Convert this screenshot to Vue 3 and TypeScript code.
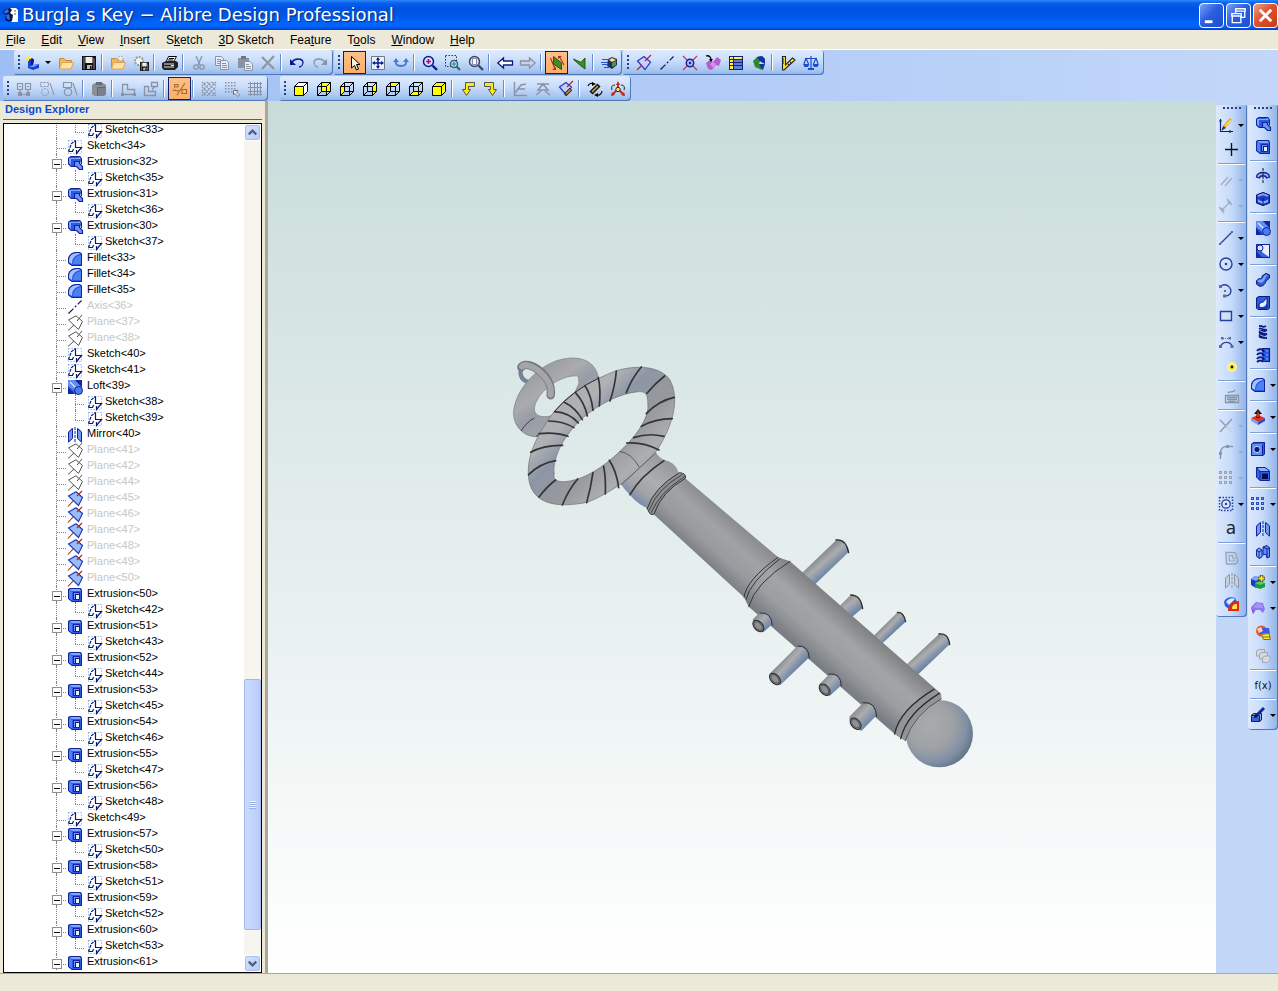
<script setup lang="ts">
import { ref } from 'vue'

interface MenuItem { before: string; key: string; after: string }
interface Tool { icon: string; label: string; drop?: boolean; active?: boolean; off?: boolean }
type Group = Tool[]
interface Bar { name: string; groups: Group[] }
interface Node { icon: string; text: string; dim?: boolean; children?: string[] }

const menus: MenuItem[] = [
  { before: '', key: 'F', after: 'ile' },
  { before: '', key: 'E', after: 'dit' },
  { before: '', key: 'V', after: 'iew' },
  { before: '', key: 'I', after: 'nsert' },
  { before: 'S', key: 'k', after: 'etch' },
  { before: '', key: '3', after: 'D Sketch' },
  { before: 'Fea', key: 't', after: 'ure' },
  { before: 'T', key: 'o', after: 'ols' },
  { before: '', key: 'W', after: 'indow' },
  { before: '', key: 'H', after: 'elp' },
]

const t = (icon: string, label: string, opts: Partial<Tool> = {}): Tool => ({ icon, label, ...opts })
const off = { off: true }

const rowOne: Bar[] = [
  { name: 'Standard', groups: [
    [t('newPart', 'New', { drop: true }), t('open', 'Open'), t('save', 'Save')],
    [t('openRepo', 'Open from repository'), t('saveRepo', 'Save to repository', off)],
    [t('print', 'Print')],
    [t('cut', 'Cut', off), t('copy', 'Copy', off), t('paste', 'Paste', off), t('remove', 'Delete', off)],
    [t('undo', 'Undo'), t('redo', 'Redo', off)],
  ] },
  { name: 'View', groups: [
    [t('cursor', 'Select', { active: true }), t('pan', 'Pan'), t('rotate', 'Rotate')],
    [t('zoomIn', 'Zoom'), t('zoomWin', 'Zoom to window'), t('zoomFit', 'Zoom to fit')],
    [t('back', 'Previous view'), t('forward', 'Next view', off)],
    [t('planeOn', 'Orient to plane', { active: true }), t('planeFlag', 'Section')],
    [t('render', 'Render')],
  ] },
  { name: 'Reference', groups: [
    [t('refPlane', 'Plane'), t('refAxis', 'Axis'), t('refPoint', 'Point'), t('refSurf', 'Surface'), t('table', 'Design table'), t('regen', 'Regenerate')],
    [t('measure', 'Measure'), t('scale', 'Physical properties')],
  ] },
]

const rowTwo: Bar[] = [
  { name: 'Sketch tools', groups: [
    [t('con1', 'Constraints', off), t('con2', 'Show constraints', off), t('con3', 'Auto constraints', off)],
    [t('clip', 'Clipboard', off)],
    [t('shapeL', 'Project', off), t('shapeL2', 'Inference', off)],
    [t('ortho', 'Ortho', { active: true })],
    [t('mesh', 'Snap', off), t('gridPick', 'Snap to grid', off), t('grid', 'Grid', off)],
  ] },
  { name: 'Orientation', groups: [
    [t('cubeFront', 'Front'), t('cubeBack', 'Back'), t('cubeLeft', 'Left'), t('cubeRight', 'Right'), t('cubeTop', 'Top'), t('cubeBottom', 'Bottom'), t('cubeIso', 'Isometric')],
    [t('turnL', 'Turn left'), t('turnR', 'Turn right')],
    [t('orSk', 'Orient to sketch', off), t('orSk2', 'Sketch view', off), t('planePen', 'Sketch on plane')],
    [t('penRot', 'Edit view'), t('triad', 'Triad')],
  ] },
]

const sketchBar: Group[] = [
  [t('skEdit', 'Activate sketch', { drop: true }), t('plus', 'Add')],
  [t('parallel', 'Parallel', { drop: true, off: true }), t('dim', 'Dimension', { drop: true, off: true })],
  [t('line', 'Line', { drop: true }), t('circle', 'Circle', { drop: true }), t('arc', 'Arc', { drop: true }), t('rect', 'Rectangle', { drop: true }), t('spline', 'Spline', { drop: true }), t('point', 'Point')],
  [t('keyboard', 'Direct entry', off)],
  [t('trim', 'Trim', { drop: true, off: true }), t('round', 'Fillet', { drop: true, off: true }), t('dots', 'Pattern', { drop: true, off: true }), t('circRef', 'Reference', { drop: true }), t('letter', 'Text')],
  [t('offset', 'Offset', off), t('mirrorOff', 'Mirror', off), t('project', 'Project to sketch')],
]

const featureBar: Group[] = [
  [t('extrude', 'Extrude boss'), t('exCut', 'Extrude cut')],
  [t('revolve', 'Revolve boss'), t('revCut', 'Revolve cut')],
  [t('loft', 'Loft boss'), t('loftCut', 'Loft cut')],
  [t('sweep', 'Sweep boss'), t('sweepCut', 'Sweep cut')],
  [t('helix', 'Helix boss'), t('helixCut', 'Helix cut')],
  [t('fillet', 'Fillet', { drop: true })],
  [t('draft', 'Draft', { drop: true })],
  [t('hole', 'Hole', { drop: true }), t('shell', 'Shell')],
  [t('dotsBlue', 'Pattern', { drop: true }), t('mirror', 'Mirror'), t('mirrorBody', 'Mirror body')],
  [t('boolAdd', 'Boolean', { drop: true }), t('surface', 'Surface', { drop: true }), t('colorBox', 'Catalog feature'), t('stackOff', 'Suppress', off)],
  [t('fx', 'Equation editor')],
  [t('paintBox', 'Color', { drop: true })],
]

const ext = (n: number, child: number, icon = 'exCut'): Node => ({ icon, text: `Extrusion<${n}>`, children: [`Sketch<${child}>`] })
const leaf = (icon: string, text: string, dim = false): Node => ({ icon, text, dim })

const tree = ref<Node[]>([
  ext(32, 35, 'extrude'), ext(31, 36, 'extrude'), ext(30, 37, 'extrude'),
  leaf('fillet', 'Fillet<33>'), leaf('fillet', 'Fillet<34>'), leaf('fillet', 'Fillet<35>'),
  leaf('refAxis', 'Axis<36>', true),
  leaf('planeHidden', 'Plane<37>', true), leaf('planeHidden', 'Plane<38>', true),
  leaf('sketch', 'Sketch<40>'), leaf('sketch', 'Sketch<41>'),
  { icon: 'loft', text: 'Loft<39>', children: ['Sketch<38>', 'Sketch<39>'] },
  leaf('mirror', 'Mirror<40>'),
  ...[41, 42, 44].map((n) => leaf('planeHidden', `Plane<${n}>`, true)),
  ...[45, 46, 47, 48, 49, 50].map((n) => leaf('planeBlue', `Plane<${n}>`, true)),
  ...[50, 51, 52, 53, 54, 55, 56].map((n) => ext(n, n - 8)),
  leaf('sketch', 'Sketch<49>'),
  ...[57, 58, 59, 60].map((n) => ext(n, n - 7)),
  { icon: 'exCut', text: 'Extrusion<61>', children: [] },
])

const s = (d: string, c: string, w = 1, f = 'none') => `<path d="${d}" fill="${f}" stroke="${c}" stroke-width="${w}"/>`
const f = (d: string, c: string) => `<path d="${d}" fill="${c}"/>`

const NAVY = '#0a1a8c'
const G = '#8a93a5'
const K = '#000'
const BLUE = '#2b5be0'
const SKY = '#7fa6f8'

const wires = s('M5.5 1.5H14.5V10.5H5.5ZM1.5 5.5H10.5V14.5H1.5ZM1.5 5.5L5.5 1.5M10.5 5.5L14.5 1.5M10.5 14.5L14.5 10.5M1.5 14.5L5.5 10.5', K)
const solid = 'M1.5 5.5L5.5 1.5H14.5V10.5L10.5 14.5H1.5Z'
const cube = (face: string) => f(face, '#ffff00') + wires
const corner = s('M1.5 5.5H10.5V14.5M10.5 5.5L14.5 1.5', K)

const dotGrid = (c: string, edge: string) =>
  [1, 6, 11].flatMap((x) => [2, 7, 12].map((y) => `<rect x="${x + 0.5}" y="${y - 0.5}" width="2" height="2" fill="${c}" stroke="${edge}"/>`)).join('')

const glass = (x: number, y: number, r: number, c: string) =>
  s(`M${x + r - 1} ${y + r - 1}L15 15`, c, 2.4) + `<circle cx="${x}" cy="${y}" r="${r}" fill="#cfe6ff" stroke="${c}" stroke-width="1.5"/>`

const folder = f('M1 4H6L8 6H14V14H1Z', '#f2b95c') + s('M1.5 13.5V3.5H6L7.5 5.5H13.5V7.5', '#c98a33') + f('M1 14L4 7H16L13 14Z', '#ffe2a4') + s('M1.5 14L4 7.5H15.5L13 14Z', '#dda350')

const disk = (x: number, y: number, z: number) =>
  `<g transform="translate(${x} ${y}) scale(${z})">` + f('M0 0H14V14H0Z', '#111') + f('M1.5 1H2.5V13H1.5ZM11.5 2H12.5V13H11.5Z', '#888') + f('M3.5 1H10.5V7H3.5Z', '#eee') + f('M5 9H10V13H5Z', '#bbb') + f('M8 10H9.5V13H8Z', '#111') + '</g>'

const planeShape = 'M1.5 5L9 .8L15.5 6.5L11.5 14.5Z'
const sketchGlyph = (c: string) =>
  `<path d="M1.5 1.5H14.5V14.5H1.5Z" fill="none" stroke="#5a96e6" stroke-dasharray="1 2"/>` +
  `<path d="M1.5 12.5L4.5 4.5L8.5 1.5" fill="none" stroke="${c}" stroke-width="1.2" stroke-dasharray="3 1"/>` +
  s('M1.5 12.5H5.5L6.500 10M8.5 1.5V8.5H14.5L9.5 14.5V11', c, 1.2)

const mirrorGlyph = (a: string, b: string) =>
  f('M1 5L5 1V12L1 16Z', a) + s('M1.5 5L5.5 1.5V11.5L1.5 15Z', b) + f('M11 1L15 5V16L11 12Z', a) + s('M10.5 1.5L14.5 5V15L10.5 11.5Z', b) + `<path d="M8 0V16" stroke="${b}" stroke-dasharray="3 1"/>`

const icons: Record<string, string> = {
  app: f('M7 1H13L15 3V15H7Z', '#fff') + f('M1 3L7 1L9 3L7 6L10 8L9 14L7 15L2 13L3 8L0 6Z', '#0c1440') + f('M1 4L5 2L6 5L2 7ZM3 8L6 7L7 13L4 12Z', '#2f6ff0') + s('M11 4H13M11 7H13', '#556'),
  newPart: f('M3 5L7 3L9 5L8 10L14 9V13L8 15L3 13Z', '#1742d8') + f('M7 3L9 5L8 10L6 11L6 5Z', '#0a1a8c') + f('M3 1H4V3H6V4H4V6H3V4H1V3H3Z', '#ffe060') + f('M4 12L8 10L14 9L9 12Z', '#6f9cff'),
  open: folder,
  save: disk(1, 1, 1),
  openRepo: folder + `<circle cx="10.5" cy="3.5" r="2.5" fill="#eee" stroke="#999" stroke-dasharray="2 1"/>`,
  saveRepo: `<circle cx="6" cy="6" r="4" fill="#f2f2f2" stroke="#999" stroke-width="2" stroke-dasharray="2 1"/>` + disk(7, 7, 0.64),
  print: f('M4 7L6 1H15L12 7Z', '#fff') + s('M4.5 6L6.5 1.5H14.5L12 6M7 3.5H12M6 5H11', K) + f('M0 8L4 6H14L16 7.5V12L13 15H2L0 13Z', '#222') + f('M2 8.5H12V9.5H2ZM2 11.5H12V12.5H2Z', '#ddd') + f('M9 10H12V11H9Z', '#ff0'),
  cut: s('M5 1L9 10M11 1L7 10', G, 1.3) + `<circle cx="5" cy="12" r="2.2" fill="none" stroke="${G}" stroke-width="1.3"/><circle cx="11" cy="12" r="2.2" fill="none" stroke="${G}" stroke-width="1.3"/>`,
  copy: s('M1.5 1.5H7.5L9.5 3.5V10.5H1.5ZM3 4.5H7M3 6.5H7M3 8.5H6', G, 1, '#e6edf8') + s('M6.5 5.5H12.5L14.5 7.5V14.5H6.5ZM8 8.5H12M8 10.5H13M8 12.5H13', G, 1, '#e6edf8'),
  paste: f('M1 3H12V13H1Z', G) + f('M4 1H9V4H4Z', '#6d7588') + s('M7.5 6.5H13L15.5 9V15.5H7.5ZM9 9.5H12M9 11.5H14M9 13.5H14', G, 1, '#e6edf8'),
  remove: s('M2 2L14 14M14 1L2 14', '#9098a8', 2.3),
  undo: s('M3 7C6 3 13 3 14 7C14 10 12 12 10 12', NAVY, 1.3) + f('M1 4V10H7Z', NAVY),
  redo: s('M13 7C10 3 3 3 2 7C2 10 4 12 6 12', G, 1.3) + f('M15 4V10H9Z', G),
  cursor: s('M4.5 1.5V13L7.5 10.5L9.5 15L11.5 14L9.5 9.5H13Z', K, 1, '#fff3dd'),
  pan: s('M1.5 1.5H14.5V14.5H1.5Z', '#778', 1, '#e7effc') + s('M8 3V13M3 8H13', NAVY, 1.4) + f('M8 2L10 5H6ZM8 14L10 11H6ZM2 8L5 6V10ZM14 8L11 6V10Z', NAVY),
  rotate: s('M3 6C2 9 4 11 8 11S14 9 13 6', '#4a78d0', 2) + f('M0 7L3 3L6 7ZM10 7L13 3L16 7Z', '#4a78d0'),
  zoomIn: glass(6.5, 6.5, 5, NAVY) + s('M6.5 4V9M4 6.5H9', '#c00070', 1.6),
  zoomWin: `<path d="M.5.5H11.5V11.5H.5Z" fill="none" stroke="#333" stroke-dasharray="1.5 1.5"/>` + glass(9, 9, 3.5, '#2c6a7c') + s('M9 7V11M7 9H11', '#2c6a7c'),
  zoomFit: glass(6.5, 6.5, 5, '#38486c') + s('M4.5 3.5H8.5V9.5H4.5Z', '#88a', 1, '#fff'),
  back: s('M.8 8L6.5 3V6H15.5V10H6.5V13Z', NAVY, 1.3, '#fff'),
  forward: s('M15.2 8L9.5 3V6H.5V10H9.5V13Z', G, 1.3, '#c8d3e6'),
  planeOn: f('M4 1L13 8V15L4 9Z', '#3f8e20') + s('M4.5 1.5L12.5 8V14.5L4.5 9Z', '#245c10') + s('M1.5 3L6 14M10 1L15 10', '#c02020', 1.1) + f('M3 15H7V12ZM13 1H9V4Z', '#c02020'),
  planeFlag: f('M1 4L9 7L13 3V14L9 11Z', '#3f8e20') + s('M1.5 4L9 7.5L13 3V14L9 11L1.5 4.5', '#245c10'),
  render: f('M7 4L11 2L16 4V10L11 14L6 11Z', '#1b2f70') + f('M8 5L11 3L15 5L11 7Z', '#ffe44a') + f('M11 8L15 6V10L11 12Z', '#4c9a38') + s('M1 4.5H8M0 7.5H7M1 9.5H7M3 12.5H8', '#2454c8'),
  refPlane: s('M1.5 6L8 1.5L14.5 7L9 14.5Z', '#2836c0', 1.2, '#c8d0fa') + s('M1 15L6 10M9 6L15 0', '#c02030', 1.2),
  refAxis: `<path d="M1.5 14.5L14.5 1.5" fill="none" stroke="#0a1a6c" stroke-width="1.2" stroke-dasharray="7 2 2 2"/>`,
  refPoint: s('M1 1L15 15M15 1L1 15', '#c0305a', 1.1) + `<circle cx="8" cy="8" r="3.7" fill="#aeb8f4" stroke="#1c2490" stroke-width="1.5"/><circle cx="8" cy="8" r="1.2" fill="#1c2490"/>`,
  refSurf: f('M1 8L5 5L8 7L12 2L16 5L14 11L11 10L7 15L3 14Z', '#b45cd0') + f('M5 9L8 7L11 9L8 13Z', '#d690ec') + s('M1 1C4 0 6 2 6 5', K, 1.3) + f('M4 4H8L6 7Z', K),
  table: f('M1 1H15V15H1Z', '#16206c') + f('M2 2H5V4H2ZM6 2H14V4H6ZM2 5H5V7H2ZM2 8H5V10H2ZM2 11H5V14H2Z', '#ffee44') + f('M6 5H14V7H6ZM6 8H14V10H6ZM6 11H14V14H6Z', '#5a7fe0'),
  regen: f('M2 6L6 2L11 1L14 4L9 6L8 9L13 11L11 15L4 12Z', '#2a8a2a') + f('M6 2L11 1L14 4V9L10 7L8 5Z', '#1230b0') + f('M8 9L14 9L12 15L10 13Z', '#123a90'),
  measure: f('M2 1H5V10L13 3L15 5L4 15H2Z', '#ffe818') + s('M2.5 1.5H5.5V10L12.5 3L15 5L4 15H2.5ZM3 4H4M3 6H4M3 8H4M8 9L9 10M10 7L11 8', '#222', 1.1),
  scale: s('M2 3.5H14M8 1V13M3 3L1 9M3 3L5.5 9M13 3L10.5 9M13 3L15 9', '#1c4cd0', 1.2) + f('M0 9H6.5L5 12H1.5ZM9.5 9H16L14.5 12H11ZM5 13H11V15H5Z', '#1c4cd0'),
  con1: s('M1.5 2.5H6.5V8.5H1.5ZM9.5 2.5H14.5V8.5H9.5ZM3 5.5H5M11 5.5H13M4 9V13M12 9V13M2 13.5H14', G, 1.2) + f('M2 11H6V15H2ZM10 11H14V15H10Z', G),
  con2: `<path d="M1.5 1.5H9.5V5.5H1.5Z" fill="none" stroke="${G}" stroke-dasharray="2 1"/><circle cx="6" cy="11" r="3.5" fill="none" stroke="${G}" stroke-dasharray="2 1"/>` + s('M11 2L15 14', G),
  con3: s('M1.5 1.5H9.5V6.5H1.5ZM11 2L15 14', G, 1.2) + `<circle cx="6" cy="11" r="3.7" fill="none" stroke="${G}" stroke-width="1.2"/>`,
  clip: f('M1 4L4 2H12L15 4V13L13 15H3L1 13Z', '#8b8f98') + f('M5 1H11V4H5Z', '#666c78') + s('M6.5 14.5V6.5H14.5', '#5f6572') + f('M7 7H15V13L13 15H7Z', '#7a808c'),
  shapeL: s('M2.5 3.5H7.500V8.5H14.5V13.5H2.5Z', G, 1.3) + f('M1 12H4V15H1ZM13 12H16V15H13Z', G),
  shapeL2: s('M1.5 5.5H5.5V10.5H12.5V14.5H1.5ZM8.5 1.5H14.5V5.5H8.5ZM9 9L12 5', G, 1.3),
  ortho: s('M1 10C3 7 5 12 7 9M5 14L13 2M10 8.5H14.5V12.5H10ZM2.5 3.5H6V6H2.5Z', '#a46c28', 1.1),
  mesh: `<path d="M1 5L5 1M1 10L10 1M1 15L15 1M6 15L15 6M11 15L15 11M11 1L15 5M6 1L15 10M1 1L15 15M1 6L10 15M1 11L5 15" fill="none" stroke="${G}" stroke-width="1.2" stroke-dasharray="2 1"/>`,
  gridPick: [1, 4, 7, 10].flatMap((x) => [1, 4, 7, 10].map((y) => `<rect x="${x}" y="${y}" width="1.5" height="1.5" fill="${G}"/>`)).join('') + s('M9.5 9.5H14L12.5 11L15.5 14L14 15.5L11 12.5L9.5 14Z', '#6d7588', 1, '#eef3fc'),
  grid: s('M1 2.5H15M1 6.5H15M1 10.5H15M1 13.5H15M3.5 1V15M7.5 1V15M10.5 1V15M13.5 1V15', G),
  cubeFront: f(solid, '#fff') + f('M1.5 5.5H10.5V14.5H1.5Z', '#ff0') + s(solid, K) + corner,
  cubeBack: cube('M5.5 1.5H14.5V10.5H5.5Z'),
  cubeLeft: cube('M1.5 5.5L5.5 1.5V10.5L1.5 14.5Z'),
  cubeRight: cube('M10.5 5.5L14.5 1.5V10.5L10.5 14.5Z'),
  cubeTop: cube('M1.5 5.5L5.5 1.5H14.5L10.5 5.5Z'),
  cubeBottom: cube('M1.5 14.5L5.5 10.5H14.5L10.5 14.5Z'),
  cubeIso: s(solid, K, 1, '#ff0') + corner,
  turnL: s('M14.5 1.5H5.5V8.5H2.5L6.500 14.5L10.5 8.5H8.5V5.5H14.5Z', '#555', 1, '#ffee00'),
  turnR: s('M1.5 1.5H10.5V8.5H13.5L9.500 14.5L5.5 8.5H7.5V5.5H1.5Z', '#555', 1, '#ffee00'),
  orSk: s('M2.5 1V14.5H15M3 12L9 4L14 3M5 8H13', G, 1.4),
  orSk2: s('M2 3H14M8 3L3 9H13ZM1 14L6 10M15 14L10 10', G, 1.5),
  planePen: s('M1.5 6L8 1.5L13.5 6L8 13.5Z', '#2836c0', 1.2, '#c8d0fa') + s('M9 6L15 0', '#c02030', 1.2) + s('M7 14L13 8', '#222', 3.6) + s('M8 13L12.5 8.5', '#e08a3c', 1.6),
  penRot: s('M4 12L12 4', '#111', 4.4) + s('M5 11L11 5', '#e0a04c', 1.6) + s('M1 5C2 2 5 2 7 3M15 10C15 13 12 15 9 14', K, 1.1) + f('M5 1L9 3L5 5ZM11 12V16L7 14Z', K),
  triad: s('M8 2V8L2 14M8 8L14 14', '#d02020', 1.8) + f('M8 0L10 4H6ZM1 15L2 11L5 14ZM15 15L14 11L11 14Z', '#d02020') + `<circle cx="8" cy="8.5" r="2.2" fill="#ffee44" stroke="#222"/>` + s('M2 9C1 6 2 4 5 4M14 9C15 6 14 4 11 4', '#222'),
  skEdit: s('M2.5 2V14.5H15', NAVY, 1.2) + s('M4 13L12 4M1 4L4 4M12 13V16', '#333', 1.2) + s('M6 10L13 2', '#f2a020', 3) + s('M7 9L13 3', '#ffe44a', 1.2) + f('M4 13L5 9L8 11Z', '#333'),
  plus: s('M7.5 1V14M1 7.5H14', '#111', 1.4),
  parallel: s('M3 13L10 5M7 14L14 6', '#a4adbf', 1.4),
  dim: s('M1 9L6 15M9 1L14 7M4 12L12 4', '#a4adbf', 1.3) + f('M3 13V9L7 13ZM13 3V7L9 3Z', '#a4adbf'),
  line: s('M2.5 13.5L13.5 2.5', '#26409c', 1.3) + f('M1 13H3V15H1ZM13 1H15V3H13Z', '#5a6cac'),
  circle: `<circle cx="8" cy="8" r="6" fill="none" stroke="#26409c" stroke-width="1.4"/><circle cx="8" cy="8" r="1.3" fill="#26409c"/>`,
  arc: s('M3 4C9 0 15 7 12 12C11 13 9 14.5 6 14', '#26409c', 1.4) + f('M1 3H4V6H1ZM5 12.5H8V15.5H5ZM6 8H8V10H6Z', '#5a6cac'),
  rect: s('M2.5 3.5H13.5V12.5H2.5Z', '#26409c', 1.4),
  spline: s('M2.5 13C4 7 12 7 14 12', '#26409c', 1.4) + f('M1 11H4V14H1ZM12.5 11H15.5V14H12.5ZM3 3H5.5V5.5H3ZM10.5 3H13V5.5H10.5Z', '#5a6cac') + `<path d="M5 4.5H11" stroke="#5a6cac" stroke-dasharray="1 1"/>`,
  point: `<circle cx="8" cy="8" r="5" fill="#f7f29a"/><circle cx="8" cy="8" r="3" fill="#ffee30"/><circle cx="8" cy="8" r="1.4" fill="#111"/>`,
  keyboard: s('M1.5 7.5H14.5V14.5H1.5ZM3 9.5H13M3 11.5H13M4.5 13.5H11M4 5C6 2 8 6 11 2', G, 1.3),
  trim: s('M2 2L13 13M14 1L2 14', '#8c96aa', 1.2) + f('M7 7L15 11L12 14Z', '#cdd5e2'),
  round: s('M2.5 15V9C2.5 4 6 2.5 9 2.5H15', '#8c96aa', 1.4) + f('M1 8H4V11H1ZM8 1H11V4H8Z', '#8c96aa'),
  dots: dotGrid('#c6cbd4', '#9aa2b2'),
  circRef: `<path d="M1.5 1.5H14.5V14.5H1.5Z" fill="none" stroke="#26409c" stroke-width="1.5" stroke-dasharray="1.5 1.5"/><circle cx="8" cy="8" r="4.2" fill="#dce8ff" stroke="#26409c" stroke-width="1.3"/><circle cx="8" cy="8" r="1.2" fill="#26409c"/>`,
  letter: '<text x="7" y="13" text-anchor="middle" font-family="DejaVu Sans, sans-serif" font-size="17" fill="#222">a</text>',
  offset: s('M2 2.5H9C13 2.5 13 6 12 7C15 9 14 14 10 14H2.5Z', '#9aa3b4', 1.4) + s('M5 5.5H8.5V8C11 8 11 11 9.5 11H5.5Z', '#9aa3b4', 1.2),
  mirrorOff: mirrorGlyph('#c8cdd6', '#9098a8'),
  project: f('M0 6C1 2 7 0 11 2L13 6L6 14L1 10Z', '#2b5be0') + f('M2 6C4 3 8 1 11 3L5 9Z', '#dce8ff') + f('M4 15C4 9 8 5 15 5V15Z', '#e02818') + f('M8 13C8 9 10 8 13 8V13Z', '#ffe14a'),
  extrude: f('M1 3L4 1H13L15 4V8L11 6H8V12H4L1 9Z', BLUE) + f('M2 3H11L13 2L14 4H4L4 10L2 8Z', SKY) + s('M1.5 3L4 1.5H13L14.5 4V9M1.5 3V9L4 11.5H8', '#10229c') + s('M7.5 6.5H12.5V8.5L15.5 11.5V14.5H12.5L9.5 11.5H7.5Z', '#10229c', 1.2, '#6e96f6'),
  exCut: f('M1 2L3 1H14L15 3V15H5L1 12Z', BLUE) + f('M2 3L5 5V14L2 11Z', '#4f80f4') + f('M3 2H13L14 4H5L3 3Z', SKY) + s('M1.5 2.5L3 1.5H13L14.5 3.5V14.5H5L1.5 11.5Z', '#10229c') + s('M6.5 5.5H12.5V12.5H6.5Z', '#10229c', 1, '#6d96f8') + f('M8 7H12V12H8Z', '#0c1a7c') + f('M9 8H12V12H9Z', '#e8f0ff'),
  revolve: f('M1 9C1 3 15 3 15 9L11 10C11 7 5 7 5 10Z', '#8fb2f8') + s('M1.5 9C1.5 3 14.5 3 14.5 9L11.5 10C11 7 5 7 4.5 10Z', '#10229c', 1.3) + `<path d="M8 0V16" stroke="#111" stroke-dasharray="3 1"/>`,
  revCut: f('M1 4L8 1L15 4V12L8 15L1 12Z', '#1a3cc8') + f('M2 4L8 2L14 4L12 6C10 4 6 4 4 6Z', SKY) + f('M3 8C6 11 10 11 13 8V11L8 13L3 11Z', '#86a8f6') + s('M1.5 4L8 1.5L14.5 4V12L8 14.5L1.5 12ZM8 7V14', '#0c1a7c'),
  loft: f('M1 1H15V15H1Z', '#2450d8') + f('M1 1H8L15 9V15H11L1 7Z', '#5f8ef6') + f('M8 1H15V8Z', '#15259c') + f('M1 8L7 15H1Z', '#15259c') + s('M3 3L10 10', '#dfe9ff', 1.2) + `<circle cx="11.5" cy="11.5" r="4" fill="#4c7cf4" stroke="#142090"/>`,
  loftCut: f('M1 1H15V15H1Z', '#3664e4') + f('M6 2H14V14L7 9Z', '#e6eeff') + s('M1.5 1.5H14.5V14.5H1.5Z', '#10229c') + `<circle cx="5" cy="5" r="3" fill="#dce8ff" stroke="#10229c"/>` + f('M2 9L7 14H2Z', '#1a2ca8'),
  sweep: f('M1 9L4 6C7 8 7 5 7 4L11 1L15 3V6L11 9C10 13 7 15 4 14L1 12Z', BLUE) + f('M2 9L4 7C8 9 8 5 9 4L12 2L13 3C9 5 11 9 6 11Z', SKY) + s('M1.5 9L4 6.5C7 8 7 5 7 4L11 1.5L14.5 3V6L11 9C10 13 7 15 4 14L1.5 12Z', '#0c1a7c'),
  sweepCut: f('M1 3L4 1H15V13L13 15H3L1 13Z', BLUE) + f('M4 9L7 7C9 8 9 5 12 3V8C10 12 8 12 5 12Z', '#eaf1ff') + s('M1.5 3L4 1.5H14.5V13L12.5 14.5H3L1.5 13ZM4 9L7 7C9 8 9 5 12 3V13H4Z', '#0c1a7c'),
  helix: s('M4 2C14 2 1 6 12 6C2 6 2 10 12 10C2 9 2 14 12 14M11 2L4 5M12 6L4 9M12 10L4 13', '#0c1a7c', 1.9) + s('M5 3L11 5M5 7L11 9M5 11L11 13', SKY, 1),
  helixCut: f('M7 1H14V15H7Z', BLUE) + s('M7 1.5H14.5V14.5H7', '#0c1a7c', 1.2) + s('M2 4C4 1 8 2 9 5M2 8C4 5 8 6 9 9M2 12C4 9 8 10 9 13M2 15C4 13 7 13 8 15', '#0c1a7c', 2) + s('M4 4H7M4 8H7M4 12H7M11 4H13M11 8H13M11 12H13', SKY, 1.1),
  fillet: f('M1 9C1 4 5 1 10 1H13L15 3V15H5L1 12Z', '#2b5be0') + f('M2 9C2 5 6 2 10 2H12L13 3C8 4 5 7 5 13L2 11Z', '#a6c2fc') + f('M6 13C6 8 9 5 14 4V13Z', '#4c80f4') + s('M1.5 9C1.5 4 5 1.5 10 1.5H13L14.5 3V14.5H5L1.5 12Z', '#10229c'),
  draft: f('M1 9L8 6L15 9L8 13Z', '#e03020') + f('M1 9L8 13V16L1 12Z', '#7f9fe8') + f('M15 9L8 13V16L15 12Z', '#2a4cc0') + f('M8 0L12 5H9.5V9H6.5V5H4Z', '#111') + f('M8 1L9 5V8H7V5Z', '#e03020'),
  hole: f('M1 3L4 1H15V13L13 15H1Z', BLUE) + f('M1 3H12V14H1Z', '#5f8cf6') + s('M1.5 3L4 1.5H14.5V13L12.5 14.5H1.5ZM12.5 4V14', '#10229c') + `<circle cx="7" cy="8.5" r="3.2" fill="#0c1a7c" stroke="#c6d8ff"/>`,
  shell: f('M1 1H10L15 5V15H5L1 11Z', '#3462e6') + f('M1 1H10L15 5H5Z', '#8fb2fa') + s('M1.5 1.5H10L14.5 5V14.5H5L1.5 11ZM5 5.5H14.5M5 5.5L1.5 1.5M5 5V14', '#10229c') + f('M7 7.5H13V13H7Z', '#060c48'),
  dotsBlue: dotGrid('#8fb2fa', '#2b4cc0'),
  mirror: mirrorGlyph('#6f98f6', '#10229c'),
  mirrorBody: f('M1 6L4 4L7 6V13L4 15L1 12Z', '#7fa6f8') + s('M1.5 6L4 4L7 6V13L4 14.5L1.5 12ZM4 8V14M1.5 6L4 8L7 6', '#10229c') + f('M8 3L12 1L15 4V13L12 14L11 10L8 11Z', '#5f8cf6') + s('M8 3L12 1.5L14.5 4V13L12 14L11 10L8 11ZM12 5V13M8 3L12 5L14.5 4', '#10229c'),
  boolAdd: f('M1 5L5 2L11 4V12L6 14L1 11Z', '#1c3cc8') + f('M1 5L5 2L11 4L6 7Z', SKY) + f('M5 9L10 7L15 9V13L10 15L5 13Z', '#1f9a3c') + f('M5 9L10 7L15 9L10 11Z', '#58cc6c') + s('M11.5 1V8M8 4.500H15', '#333', 3.4) + s('M11.5 1.5V7.500M8.500 4.500H14.500', '#ffe91a', 1.8),
  surface: f('M1 7L6 2L13 3L15 9L13 13L10 10L6 10L3 14Z', '#8c78ee') + f('M3 7L7 3L12 4L13 8L6 8Z', '#a792fa') + f('M1 8L5 11L3 14Z', '#b050d0'),
  colorBox: `<circle cx="6.5" cy="6" r="5.5" fill="#e8552a"/>` + f('M5 3H14L15 9L9 12L4 8Z', '#3a5ae6') + f('M2 4L6 2L8 6L4 8Z', '#ffd4a8') + f('M6 9L14 8L16 15H8Z', '#ffe84a') + s('M6.5 9.5L14 8.5L15.5 14.5H8.5ZM8 12H15', '#8a6a10'),
  stackOff: s('M1.5 3L4 1.5H9.5V6L7 8H1.5Z', '#a0a6b2', 1, '#d6d9de') + s('M4.5 6L7 4.5H12.5V9L10 11H4.5Z', '#a0a6b2', 1, '#d6d9de') + s('M7.5 9.5L10 8H15V12.5L12.5 14.5H7.5Z', '#a0a6b2', 1, '#d6d9de'),
  fx: '<text x="8" y="12" text-anchor="middle" font-family="DejaVu Sans, sans-serif" font-size="10" fill="#111">f(x)</text>',
  paintBox: f('M1 8L4 6H12V13L10 15H1Z', '#88a8f0') + f('M2 10L6 9L10 10V14H2Z', '#3a62e0') + s('M1.5 8L4 6.5H11.5V13L9.5 14.5H1.5ZM1.5 8.5H9.5V14', '#222') + s('M6 9L14 1', '#10229c', 3) + f('M4 11L5 7L8 10Z', '#111'),
  planeHidden: s(planeShape, '#555', 1, '#fff') + s('M1 15.5L7 10M10 6L15 0', '#555'),
  planeBlue: s(planeShape, '#1c3cb4', 1.2, '#9cbcfa') + s('M1 15.5L6 10M10 5L15 0', '#b02020', 1.1),
  sketch: sketchGlyph('#0c1a6c'),
}

const wrapLines = [
  'M295 113Q303 150 298 198', 'M349 93Q345 140 330 183', 'M424 81Q395 115 379 158', 'M494 108Q465 130 441 160',
  'M523 172Q475 182 439 221', 'M517 236Q465 236 424 259', 'M492 289Q445 278 401 293', 'M477 330Q430 305 380 309',
  'M255 137Q274 165 279 211', 'M226 157Q255 190 262 228', 'M193 187Q226 203 247 239', 'M164 215Q208 218 235 249',
  'M146 243Q190 244 222 263', 'M117 281Q165 275 204 289', 'M92 337Q130 315 188 316', 'M86 404Q120 370 167 362',
  'M117 471Q140 440 167 420', 'M187 495Q205 450 233 417', 'M260 488Q272 445 279 398', 'M316 462Q318 415 311 379', 'M356 443Q350 395 328 361',
]

interface Pin { body: string; cap: string; cx?: number; cy?: number; a: [number, number, number, number] }
const rearPins: Pin[] = [
  { body: 'M185 130L290 29Q320 32 327 65L220 168Z', cap: 'M288 30Q318 27 326 68', a: [250, 70, 285, 110] },
  { body: 'M295 232L332 195Q360 200 368 234L328 268Z', cap: 'M332 195Q362 195 368 236', a: [310, 210, 345, 252] },
  { body: 'M398 320L473 247Q492 250 497 275L425 342Z', cap: 'M472 247Q492 246 497 275', a: [440, 278, 465, 302] },
  { body: 'M495 408L598 311Q624 315 630 342L530 437Z', cap: 'M597 312Q625 308 629 344', a: [545, 358, 575, 394] },
]
const frontPins: Pin[] = [
  { body: 'M38 268L58 249Q92 245 98 282L70 307Q40 300 38 268Z', cap: 'M60 249Q95 245 97 286', cx: 55, cy: 288, a: [48, 258, 84, 296] },
  { body: 'M88 432L170 350Q200 345 208 382L122 464Q90 462 88 432Z', cap: 'M174 348Q206 346 208 384', cx: 105, cy: 447, a: [125, 392, 164, 426] },
  { body: 'M238 463L268 432Q300 428 304 466L270 497Q240 493 238 463Z', cap: 'M266 432Q304 428 304 468', cx: 254, cy: 479, a: [250, 446, 288, 484] },
  { body: 'M328 560L368 520Q404 516 410 556L365 602Q330 596 328 560Z', cap: 'M370 518Q408 514 410 560', cx: 347, cy: 581, a: [346, 540, 388, 582] },
]
</script>

<template>
  <div class="window">
    <header class="title">
      <svg class="ico" viewBox="0 0 16 16" v-html="icons.app"></svg>
      <h1>Burgla s Key − Alibre Design Professional</h1>
      <div class="caption">
        <button type="button" aria-label="Minimize"><svg viewBox="0 0 24 24"><path d="M5 17H13V20H5Z" fill="#fff" /></svg></button>
        <button type="button" aria-label="Restore"><svg viewBox="0 0 24 24"><path d="M9 5H19V7.5H9ZM9 7V10M18.5 7V14H15M5 10H15V12.5H5ZM5.5 12V19.5H14.5V12" fill="none" stroke="#fff" stroke-width="1.4" /></svg></button>
        <button type="button" class="close" aria-label="Close"><svg viewBox="0 0 24 24"><path d="M6 6L18 18M18 6L6 18" stroke="#fff" stroke-width="3" /></svg></button>
      </div>
    </header>

    <nav class="menu">
      <button v-for="m in menus" :key="m.before + m.key + m.after" type="button">{{ m.before }}<u>{{ m.key }}</u>{{ m.after }}</button>
    </nav>

    <div class="dock">
      <div v-for="(row, r) in [rowOne, rowTwo]" :key="r" class="dock-row" :class="{ second: r === 1 }">
        <div v-for="bar in row" :key="bar.name" class="bar" role="toolbar" :aria-label="bar.name">
          <span class="grip"></span>
          <div v-for="(group, g) in bar.groups" :key="g" class="group">
            <button v-for="tool in group" :key="tool.icon" type="button" class="tool" :class="{ active: tool.active, drop: tool.drop }" :aria-label="tool.label" :disabled="tool.off">
              <svg class="ico" viewBox="0 0 16 16" v-html="icons[tool.icon]"></svg>
              <span v-if="tool.drop" class="caret"></span>
            </button>
          </div>
        </div>
      </div>
    </div>

    <div class="body">
      <aside class="explorer">
        <h2>Design Explorer</h2>
        <div class="listbox">
          <ul class="tree">
            <li class="line"><span class="guide"></span><span class="guide inner last"></span><svg class="ico" viewBox="0 0 16 16" v-html="icons.sketch"></svg><span class="name">Sketch&lt;33&gt;</span></li>
            <li class="line"><span class="guide arm"></span><svg class="ico" viewBox="0 0 16 16" v-html="icons.sketch"></svg><span class="name">Sketch&lt;34&gt;</span></li>
            <li v-for="node in tree" :key="node.text">
              <div class="line">
                <span class="guide arm"><button v-if="node.children" type="button" class="toggle" :aria-label="'Collapse ' + node.text"></button></span>
                <svg class="ico" viewBox="0 0 16 16" v-html="icons[node.icon]"></svg>
                <span class="name" :class="{ dim: node.dim }">{{ node.text }}</span>
              </div>
              <ul v-if="node.children && node.children.length">
                <li v-for="(child, i) in node.children" :key="child" class="line">
                  <span class="guide"></span>
                  <span class="guide inner" :class="{ last: i === node.children.length - 1 }"></span>
                  <svg class="ico" viewBox="0 0 16 16" v-html="icons.sketch"></svg>
                  <span class="name">{{ child }}</span>
                </li>
              </ul>
            </li>
          </ul>
          <div class="scroll">
            <button type="button" aria-label="Scroll up"><svg viewBox="0 0 16 16"><path d="M4 10L8 6L12 10" fill="none" stroke="#4d6185" stroke-width="2.4" /></svg></button>
            <div class="track">
              <div class="space-above"></div>
              <div class="thumb"><i></i></div>
              <div class="space-below"></div>
            </div>
            <button type="button" aria-label="Scroll down"><svg viewBox="0 0 16 16"><path d="M4 6L8 10L12 6" fill="none" stroke="#4d6185" stroke-width="2.4" /></svg></button>
          </div>
        </div>
      </aside>

      <main class="stage">
        <svg class="model" viewBox="268 101 948 872" role="img" aria-label="Key model">
          <defs>
            <linearGradient id="ringA" gradientUnits="userSpaceOnUse" x1="120" y1="100" x2="480" y2="480"><stop offset="0" stop-color="#a9aaad" /><stop offset=".3" stop-color="#b0b1b3" /><stop offset=".42" stop-color="#8d96a6" /><stop offset=".6" stop-color="#98999c" /><stop offset=".75" stop-color="#adaeb0" /><stop offset="1" stop-color="#8292ac" /></linearGradient>
            <linearGradient id="ringB" gradientUnits="userSpaceOnUse" x1="90" y1="70" x2="220" y2="250"><stop offset="0" stop-color="#96979a" /><stop offset=".4" stop-color="#aaabae" /><stop offset=".6" stop-color="#989ca6" /><stop offset="1" stop-color="#a4a6ab" /></linearGradient>
            <linearGradient id="neck" gradientUnits="userSpaceOnUse" x1="150" y1="70" x2="60" y2="190"><stop offset="0" stop-color="#98999b" /><stop offset=".5" stop-color="#adaeaf" /><stop offset=".8" stop-color="#a0a2a6" /><stop offset="1" stop-color="#7c8dad" /></linearGradient>
            <linearGradient id="shaft" gradientUnits="userSpaceOnUse" x1="335" y1="233" x2="235" y2="345"><stop offset="0" stop-color="#8a8c8e" /><stop offset=".35" stop-color="#a1a2a4" /><stop offset=".7" stop-color="#999b9d" /><stop offset="1" stop-color="#7e8188" /></linearGradient>
            <linearGradient id="barrel" gradientUnits="userSpaceOnUse" x1="355" y1="278" x2="240" y2="410"><stop offset="0" stop-color="#808284" /><stop offset=".35" stop-color="#a2a4a5" /><stop offset=".65" stop-color="#9c9ea0" /><stop offset="1" stop-color="#787c83" /></linearGradient>
            <radialGradient id="ball" cx=".36" cy=".38" r=".68"><stop offset="0" stop-color="#a9aaac" /><stop offset=".5" stop-color="#9fa2a5" /><stop offset=".8" stop-color="#8190a5" /><stop offset="1" stop-color="#64748a" /></radialGradient>
            <linearGradient v-for="(p, i) in [...rearPins, ...frontPins]" :id="'pin' + i" :key="i" gradientUnits="userSpaceOnUse" :x1="p.a[0]" :y1="p.a[1]" :x2="p.a[2]" :y2="p.a[3]"><stop offset="0" stop-color="#8b8d90" /><stop offset=".4" stop-color="#abadb0" /><stop offset="1" stop-color="#6c83a6" /></linearGradient>
          </defs>

          <g transform="translate(500 340) scale(.3333)" fill="none" stroke-linecap="round" stroke-linejoin="round">
            <path d="M84 126C54 116 54 78 84 72" stroke="#75839a" stroke-width="13" />
            <path d="M128 276L112 290C70 292 38 255 41 215C45 160 95 90 170 62C235 42 285 60 295 112L225 157L237 130L235 108C180 102 105 160 103 208C104 232 135 234 158 226Z" fill="url(#ringB)" stroke="#777a80" stroke-width="2" />
            <path d="M64 272Q80 245 102 235M110 288Q140 275 158 226" stroke="#3b3d40" stroke-width="3" />
            <path d="M64 82C78 56 162 104 152 166" stroke="#75797f" stroke-width="25" />
            <path d="M66 80C80 60 160 108 152 164" stroke="#a3a5a8" stroke-width="18" />
            <path fill-rule="evenodd" d="M85 405C82 350 105 292 160 218C205 160 265 125 349 92C420 72 485 82 510 120C538 175 524 245 472 330C410 400 350 450 265 486C180 504 90 500 85 405ZM162 400C158 345 195 285 245 236C300 190 360 160 415 155C445 153 443 170 444 205C438 250 400 300 340 352C285 400 235 422 195 425C165 426 160 417 162 400Z" fill="url(#ringA)" stroke="#6a6d72" stroke-width="2" />
            <path v-for="d in wrapLines" :key="d" :d="d" stroke="#333436" stroke-width="5" />
            <path d="M162 216Q220 150 295 115" stroke="#333436" stroke-width="3" />
          </g>

          <g transform="translate(620 440) scale(.3333)" stroke-linejoin="round" stroke-linecap="round">
            <path d="M4 134L108 38Q120 55 133 60Q165 65 176 98L90 208Q55 195 30 165Q15 150 4 134Z" fill="url(#neck)" />
            <path d="M0 34Q35 40 57 80M4 134L108 38" fill="none" stroke="#4a4c50" stroke-width="2.5" />
            <path d="M30 164Q60 110 132 62" fill="none" stroke="#333" stroke-width="5" />
            <path d="M96 218Q120 150 192 112L475 352L372 472Z" fill="url(#shaft)" />
            <path d="M82 205Q100 145 178 98Q200 100 196 115Q125 155 102 222Q90 230 82 205Z" fill="#8c8e91" stroke="#333" stroke-width="3" />
            <path d="M88 210Q110 148 186 104M94 217Q118 158 193 110" fill="none" stroke="#333" stroke-width="2.5" />
          </g>

          <g transform="translate(740 530) scale(.3333)" stroke-linejoin="round" stroke-linecap="round">
            <template v-for="(p, i) in rearPins" :key="p.body">
              <path :d="p.body" :fill="`url(#pin${i})`" />
              <path :d="p.cap" fill="none" stroke="#2c2d30" stroke-width="4" />
            </template>
            <path d="M12 202Q20 155 114 82L150 94L604 492Q540 540 496 632L464 612L26 230Z" fill="url(#barrel)" />
            <path d="M12 202Q18 150 114 82M18 208Q30 155 120 86M26 230Q45 160 150 94" fill="none" stroke="#333436" stroke-width="3" />
            <circle cx="598" cy="611" r="101" fill="url(#ball)" />
            <path d="M496 632Q515 555 604 508L604 494L580 478Q475 545 464 612Z" fill="#929497" />
            <path d="M464 612Q478 540 582 478M482 626Q500 550 598 490" fill="none" stroke="#2c2d30" stroke-width="4" />
            <path d="M496 632Q520 555 604 506" fill="none" stroke="#44464a" stroke-width="2.5" />
            <template v-for="(p, i) in frontPins" :key="p.body">
              <path :d="p.body" :fill="`url(#pin${i + 4})`" />
              <path :d="p.cap" fill="none" stroke="#2c2d30" stroke-width="3" />
              <ellipse :cx="p.cx" :cy="p.cy" rx="20" ry="13" :transform="`rotate(48 ${p.cx} ${p.cy})`" fill="#7a7c81" stroke="#2c2d30" stroke-width="3" />
              <ellipse :cx="p.cx" :cy="p.cy" rx="15" ry="9" :transform="`rotate(48 ${p.cx} ${p.cy})`" fill="#8e9094" stroke="#3c3d40" stroke-width="1.5" />
            </template>
          </g>
        </svg>
      </main>

      <div class="side">
        <div v-for="(bar, b) in [sketchBar, featureBar]" :key="b" class="vbar" role="toolbar" :aria-label="b ? 'Features' : 'Sketching'">
          <span class="grip flat"></span>
          <div v-for="(group, g) in bar" :key="g" class="vgroup">
            <button v-for="tool in group" :key="tool.icon" type="button" class="vtool" :class="{ drop: tool.drop }" :aria-label="tool.label" :disabled="tool.off">
              <svg class="ico" viewBox="0 0 16 16" v-html="icons[tool.icon]"></svg>
              <span v-if="tool.drop" class="caret"></span>
            </button>
          </div>
        </div>
      </div>
    </div>

    <footer class="status"></footer>
  </div>
</template>

<style>
html, body, #app { height: 100%; margin: 0; }
body { overflow: hidden; }
</style>

<style scoped>
.window { display: flex; flex-direction: column; height: 100vh; background: #ece9d8; font: 12px/16px "Liberation Sans", Arial, sans-serif; color: #000; }
button { margin: 0; padding: 0; border: 0; background: none; font: inherit; color: inherit; }
ul { list-style: none; margin: 0; padding: 0; }
.ico { display: block; flex: none; width: 16px; height: 16px; overflow: visible; }

.title { display: flex; align-items: center; flex: none; height: 30px; padding-left: 3px; background: linear-gradient(#2a8af8 0, #0a5fee 3px, #0053e1 8px, #0057e8 16px, #0066ff 24px, #0061f8 27px, #003dd0 30px); }
.title h1 { flex: 1; margin: 0 0 0 3px; font: 18px/28px "DejaVu Sans", sans-serif; color: #fff; text-shadow: 1px 1px 1px #0a2a80; }
.caption { display: flex; gap: 2px; }
.caption button { width: 25px; height: 25px; border: 1px solid #fff; border-radius: 4px; background: linear-gradient(135deg, #7ba2f4, #2a5fe0 45%, #1c4fd0); }
.caption button svg { display: block; width: 23px; height: 23px; }
.caption .close { background: linear-gradient(135deg, #f0a088, #e0502c 45%, #c83a14); }

.menu { display: flex; flex: none; height: 19px; padding-left: 6px; gap: 16px; border-bottom: 1px solid #fff; background: #ece9d8; }
.menu button { line-height: 18px; }

.dock { flex: none; height: 51px; background: linear-gradient(90deg, #9ebef5, #b1cbf6 50%, #c2d7f9); }
.dock-row { display: flex; gap: 1px; height: 26px; padding-left: 14px; }
.dock-row.second { gap: 12px; padding-left: 3px; height: 25px; }
.bar { display: flex; align-items: center; height: 25px; padding-right: 2px; box-sizing: border-box; border-radius: 2px 4px 4px 2px; background: linear-gradient(#dfebfd, #cbdffb 40%, #a9c7f1 80%, #8fb2e8); box-shadow: inset -1px -1px 0 #5078b8; }
.grip { flex: none; width: 2px; height: 15px; margin: 0 3px 0 4px; background: repeating-linear-gradient(#27417a 0 2px, transparent 2px 4px); }
.group { display: flex; align-items: center; }
.group + .group::before { content: ""; width: 1px; height: 17px; margin: 0 3px 0 1px; border-right: 1px solid #fff; background: #6a8ccb; }
.tool { display: flex; align-items: center; justify-content: center; width: 23px; height: 23px; box-sizing: border-box; }
.tool.drop { width: 31px; gap: 4px; justify-content: flex-end; padding-right: 3px; }
.tool.active { border: 1px solid #101c70; background: linear-gradient(#fdc088, #fcae68); }
.caret { flex: none; width: 0; height: 0; border: 3px solid transparent; border-top: 3px solid #000; border-bottom: 0; }

.body { display: flex; flex: 1; min-height: 0; background: #c2d6f8; }
.explorer { display: flex; flex-direction: column; flex: none; width: 268px; box-sizing: border-box; padding: 0 3px; border-right: 3px solid #aca899; background: #ece9d8; }
.explorer h2 { flex: none; height: 18px; margin: 0 0 3px; padding-left: 2px; border-bottom: 1px solid #2a62cc; font: bold 11px/16px "Liberation Sans", Arial, sans-serif; color: #0a4ad0; }
.listbox { display: flex; flex: 1; min-height: 0; border: 1px solid #000; background: #fff; overflow: hidden; }
.tree { flex: 1; min-width: 0; margin-top: -2px; font-size: 11px; }
.line { display: flex; align-items: flex-start; height: 16px; padding-left: 48px; }
.line .ico { margin-top: 1px; }
.guide { position: relative; flex: none; width: 15px; height: 16px; }
.guide::before { content: ""; position: absolute; left: 4px; top: 0; height: 16px; border-left: 1px dotted #808080; }
.guide.arm::after { content: ""; position: absolute; left: 5px; top: 10px; width: 9px; border-top: 1px dotted #808080; }
.guide.inner { width: 20px; }
.guide.inner::before { left: 8px; }
.guide.inner::after { content: ""; position: absolute; left: 8px; top: 10px; width: 9px; border-top: 1px dotted #808080; }
.guide.inner.last::before { height: 10px; }
.toggle { position: absolute; z-index: 1; left: 0; top: 5px; width: 10px; height: 10px; border: 1px solid #909090; background: linear-gradient(#000, #000) center / 6px 1px no-repeat #fff; }
.name { padding-left: 4px; line-height: 15px; white-space: nowrap; }
.inner ~ .name { padding-left: 2px; }
.dim { color: #c6c6c6; }

.scroll { display: flex; flex-direction: column; flex: none; width: 17px; background: #f6f5f0; }
.scroll button { flex: none; height: 17px; box-sizing: border-box; border: 1px solid #fff; border-radius: 3px; background: linear-gradient(135deg, #d6e2fd, #b6cafa); box-shadow: inset 0 0 0 1px #a8bdf0; }
.scroll button svg { display: block; width: 15px; height: 15px; }
.track { display: flex; flex-direction: column; flex: 1; }
.space-above { flex: 539; }
.thumb { display: flex; align-items: center; justify-content: center; flex: 249; border-radius: 2px; border: 1px solid #a0b8ee; background: linear-gradient(90deg, #cbdafd, #bacdfb); }
.thumb i { width: 7px; height: 8px; background: repeating-linear-gradient(#eef4fe 0 1px, #98b0e8 1px 2px); }
.space-below { flex: 25; }

.stage { flex: 1; min-width: 0; background: linear-gradient(#c8dcda, #fff); overflow: hidden; }
.model { display: block; width: 100%; height: 100%; }

.side { display: flex; align-items: flex-start; flex: none; gap: 1px; padding-top: 4px; }
.vbar { display: flex; flex-direction: column; align-items: center; width: 31px; padding-bottom: 2px; border-radius: 2px 2px 4px 4px; background: linear-gradient(90deg, #dde9fd, #c6dbfa 50%, #8fb2e8); box-shadow: inset -1px -1px 0 #5078b8; }
.vbar + .vbar { width: 30px; }
.grip.flat { width: 18px; height: 2px; margin: 2px 0 3px; background: repeating-linear-gradient(90deg, #27417a 0 2px, transparent 2px 4px); }
.vgroup { display: flex; flex-direction: column; align-self: stretch; }
.vgroup + .vgroup::before { content: ""; height: 1px; margin: 2px; border-bottom: 1px solid #fff; background: #7f9fd8; }
.vtool { display: flex; align-items: center; justify-content: center; height: 23px; }
.vtool.drop { justify-content: flex-start; gap: 4px; height: 26px; padding-left: 2px; }
.vtool:disabled .caret { border-top-color: #a4adbf; }

.status { flex: none; height: 17px; border-top: 1px solid #aca899; background: #ece9d8; }
</style>
